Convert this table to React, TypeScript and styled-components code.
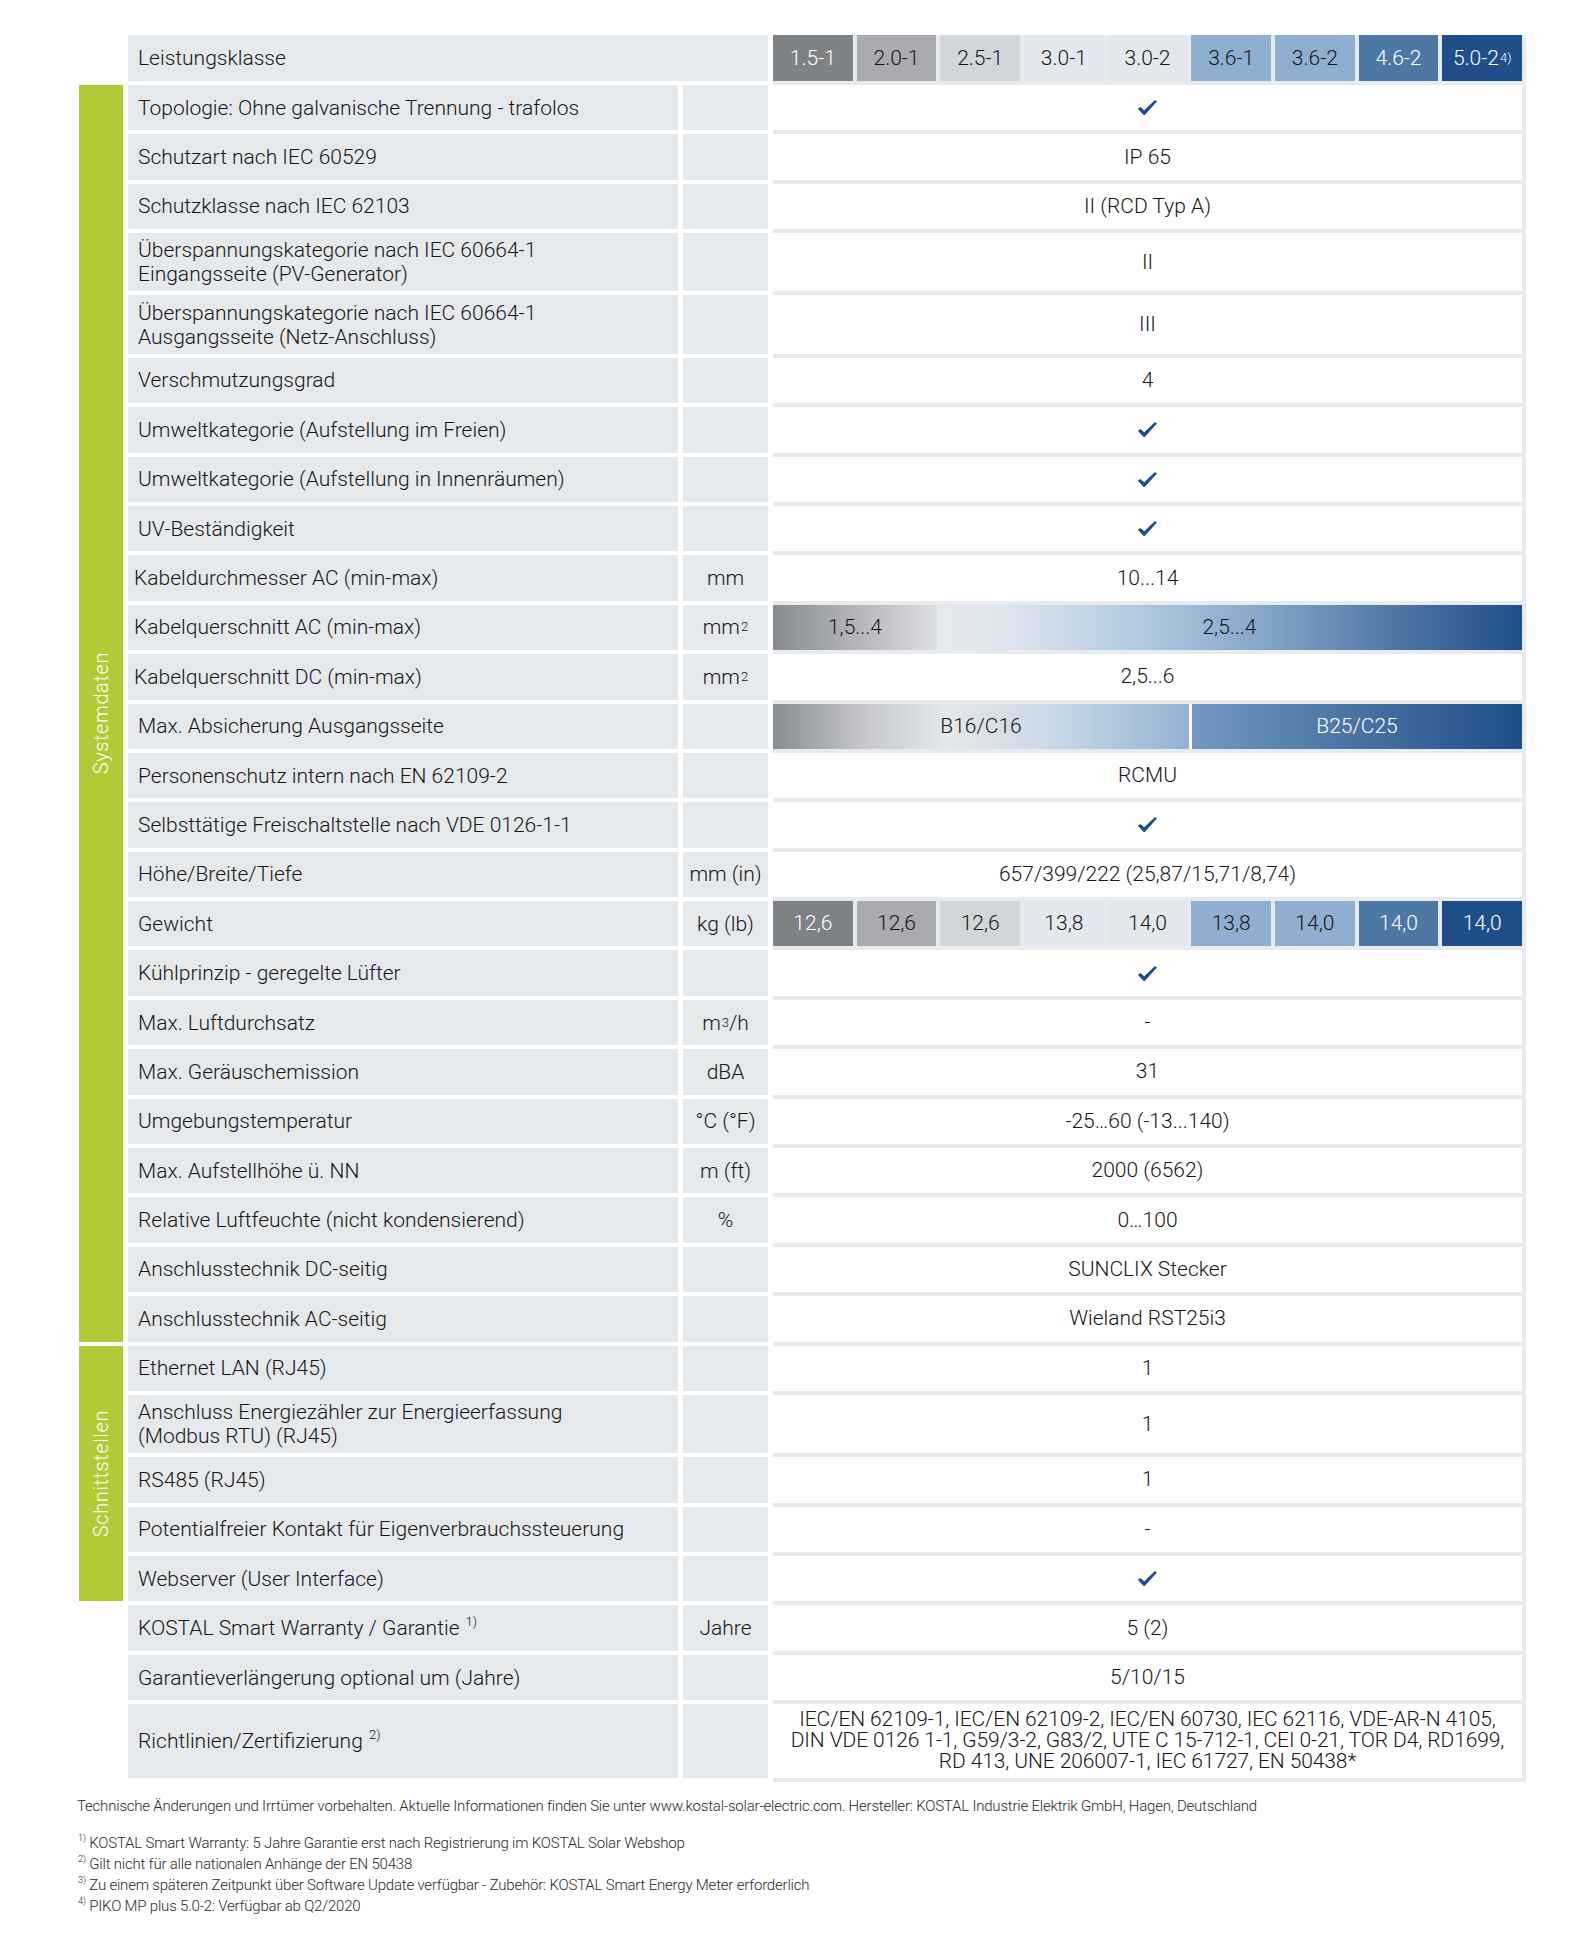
import React from 'react';
import styled, {createGlobalStyle} from 'styled-components';

const GREEN = '#b3c935';
const BLUE = '#1f4e8a';
const CELL_GRAY = '#e6e9ec';
const LINE_GRAY = '#e7eaee';
const INK = '#161616';

const GlobalStyle = createGlobalStyle`
  html, body {
    margin: 0;
    padding: 0;
    background: #fff;
  }
  body {
    font-family: Roboto, 'Liberation Sans', sans-serif;
    font-weight: 300;
    color: ${INK};
  }
`;

const Page = styled.div`
  width: 1595px;
  padding: 35px 0 40px 79px;
  box-sizing: border-box;
`;

const Table = styled.div`
  width: 1447px;
`;

const Group = styled.div`
  display: flex;
`;

const SideBar = styled.div`
  width: 44px;
  margin: 0 5px 4px 0;
  background: ${GREEN};
  display: flex;
  align-items: center;
  justify-content: center;
`;

const SideLabel = styled.span`
  writing-mode: vertical-rl;
  transform: rotate(180deg);
  color: #fff;
  font-size: 20px;
  letter-spacing: 0.6px;
`;

const Rows = styled.div`
  flex: 1;
`;

const Indented = styled.div`
  margin-left: 49px;
`;

const Row = styled.div<{$h: number}>`
  display: grid;
  grid-template-columns: 550px 85px 753px;
  column-gap: 5px;
  height: ${({$h}) => $h + 4}px;
`;

const LabelCell = styled.div<{$tight?: boolean; $span?: boolean}>`
  grid-column: ${({$span}) => ($span ? 'span 2' : 'auto')};
  box-sizing: border-box;
  height: 100%;
  border-bottom: 4px solid #fff;
  background: ${CELL_GRAY};
  padding-left: ${({$tight}) => ($tight ? 6 : 10)}px;
  display: flex;
  align-items: center;
  font-size: 21px;
  line-height: 24px;
`;

const UnitCell = styled.div`
  box-sizing: border-box;
  height: 100%;
  border-bottom: 4px solid #fff;
  background: ${CELL_GRAY};
  display: flex;
  align-items: center;
  justify-content: center;
  font-size: 21px;
`;

const ValueCell = styled.div`
  box-sizing: border-box;
  height: 100%;
  border-right: 4px solid ${LINE_GRAY};
  border-bottom: 4px solid ${LINE_GRAY};
  background: #fff;
  display: flex;
  align-items: center;
  justify-content: center;
  text-align: center;
  font-size: 21px;
  line-height: 21px;
`;

const Sup = styled.sup`
  font-size: 0.62em;
  line-height: 0;
  vertical-align: 0.7em;
  margin-left: 1px;
`;

const TONES: Record<string, [string, string]> = {
  g1: ['#7f8285', '#fff'],
  g2: ['#a9abae', INK],
  g3: ['#d3d6d9', INK],
  l: ['#e3e8ee', INK],
  b1: ['#8eafcf', INK],
  b2: ['#4d77a5', '#fff'],
  b3: ['#1f4e8a', '#fff'],
};

const BoxStrip = styled.div`
  width: 100%;
  height: 100%;
  display: grid;
  grid-template-columns: repeat(9, 1fr);
  column-gap: 4px;
  background: ${LINE_GRAY};
`;

const Box = styled.div<{$tone: string}>`
  background: ${({$tone}) => TONES[$tone][0]};
  color: ${({$tone}) => TONES[$tone][1]};
  display: flex;
  align-items: center;
  justify-content: center;
  font-size: 21px;
`;

const SegmentRow = styled.div`
  width: 100%;
  height: 100%;
  display: flex;
  gap: 3px;
`;

const Segment = styled.div<{$w?: number; $bg: string; $light?: boolean}>`
  flex: ${({$w}) => ($w ? `0 0 ${$w}px` : '1')};
  background: ${({$bg}) => $bg};
  color: ${({$light}) => ($light ? '#fff' : INK)};
  display: flex;
  align-items: center;
  justify-content: center;
  font-size: 21px;
`;

const Lines = styled.div`
  white-space: nowrap;
  letter-spacing: -0.1px;
`;

const Footer = styled.div`
  margin: 14px 0 0 -2px;
  font-size: 15px;
  line-height: 21px;
  letter-spacing: -0.2px;
  color: #2a2a2a;
`;

const Notes = styled.div`
  margin-top: 16px;
`;

const Check = () => (
  <svg width="21" height="17" viewBox="0 0 21 17">
    <path
      d="M0.8 9.8 L3.4 7.9 L7.2 11.3 L18 0.9 L20 2.6 L8.2 15.6 Q7.2 16.6 6.2 15.6 Z"
      fill={BLUE}
    />
  </svg>
);

const HEADER = ['1.5-1', '2.0-1', '2.5-1', '3.0-1', '3.0-2', '3.6-1', '3.6-2', '4.6-2', '5.0-2'];
const HEADER_TONES = ['g1', 'g2', 'g3', 'l', 'l', 'b1', 'b1', 'b2', 'b3'];
const WEIGHTS = ['12,6', '12,6', '12,6', '13,8', '14,0', '13,8', '14,0', '14,0', '14,0'];

type Spec = {
  label: React.ReactNode;
  unit?: React.ReactNode;
  value: React.ReactNode;
  h?: number;
  tight?: boolean;
};

const S = 45.4;
const D = 58.3;
const CHECK = <Check />;

const mm2 = (
  <>
    mm<Sup>2</Sup>
  </>
);

const acSplit = (
  <SegmentRow>
    <Segment $w={164} $bg="linear-gradient(90deg, #898c8f 0%, #b7b9bc 55%, #dcdee1 100%)">1,5...4</Segment>
    <Segment
      style={{marginLeft: -3}}
      $bg="linear-gradient(90deg, #e6e9ed 0%, #dde5ee 12%, #b0c8df 35%, #86a7ca 55%, #4b74a3 80%, #1f4e8a 100%)"
    >
      2,5...4
    </Segment>
  </SegmentRow>
);

const fuseSplit = (
  <SegmentRow>
    <Segment
      $w={416}
      $bg="linear-gradient(90deg, #8a8d90 0%, #c6c8cb 22%, #e4e7eb 42%, #c8d7e7 68%, #92b2d2 100%)"
    >
      B16/C16
    </Segment>
    <Segment $light $bg="linear-gradient(90deg, #7398c2 0%, #4c76a5 45%, #1f4e8a 100%)">
      B25/C25
    </Segment>
  </SegmentRow>
);

const weightStrip = (
  <BoxStrip>
    {WEIGHTS.map((w, i) => (
      <Box key={i} $tone={HEADER_TONES[i]}>
        {w}
      </Box>
    ))}
  </BoxStrip>
);

const SYSTEM: Spec[] = [
  {label: 'Topologie: Ohne galvanische Trennung - trafolos', value: CHECK},
  {label: 'Schutzart nach IEC 60529', value: 'IP 65'},
  {label: 'Schutzklasse nach IEC 62103', value: 'II (RCD Typ A)'},
  {
    label: (
      <>
        Überspannungskategorie nach IEC 60664-1
        <br />
        Eingangsseite (PV-Generator)
      </>
    ),
    value: 'II',
    h: D,
  },
  {
    label: (
      <>
        Überspannungskategorie nach IEC 60664-1
        <br />
        Ausgangsseite (Netz-Anschluss)
      </>
    ),
    value: 'III',
    h: D,
  },
  {label: 'Verschmutzungsgrad', value: '4'},
  {label: 'Umweltkategorie (Aufstellung im Freien)', value: CHECK},
  {label: 'Umweltkategorie (Aufstellung in Innenräumen)', value: CHECK},
  {label: 'UV-Beständigkeit', value: CHECK},
  {label: 'Kabeldurchmesser AC (min-max)', unit: 'mm', value: '10...14', tight: true},
  {label: 'Kabelquerschnitt AC (min-max)', unit: mm2, value: acSplit, tight: true},
  {label: 'Kabelquerschnitt DC (min-max)', unit: mm2, value: '2,5...6', tight: true},
  {label: 'Max. Absicherung Ausgangsseite', value: fuseSplit},
  {label: 'Personenschutz intern nach EN 62109-2', value: 'RCMU'},
  {label: 'Selbsttätige Freischaltstelle nach VDE 0126-1-1', value: CHECK},
  {label: 'Höhe/Breite/Tiefe', unit: 'mm (in)', value: '657/399/222 (25,87/15,71/8,74)'},
  {label: 'Gewicht', unit: 'kg (lb)', value: weightStrip},
  {label: 'Kühlprinzip - geregelte Lüfter', value: CHECK},
  {
    label: 'Max. Luftdurchsatz',
    unit: (
      <>
        m<Sup>3</Sup>/h
      </>
    ),
    value: '-',
  },
  {label: 'Max. Geräuschemission', unit: 'dBA', value: '31'},
  {label: 'Umgebungstemperatur', unit: '°C (°F)', value: '-25…60 (-13...140)'},
  {label: 'Max. Aufstellhöhe ü. NN', unit: 'm (ft)', value: '2000 (6562)'},
  {label: 'Relative Luftfeuchte (nicht kondensierend)', unit: '%', value: '0…100'},
  {label: 'Anschlusstechnik DC-seitig', value: 'SUNCLIX Stecker'},
  {label: 'Anschlusstechnik AC-seitig', value: 'Wieland RST25i3'},
];

const INTERFACES: Spec[] = [
  {label: 'Ethernet LAN (RJ45)', value: '1'},
  {
    label: (
      <>
        Anschluss Energiezähler zur Energieerfassung
        <br />
        (Modbus RTU) (RJ45)
      </>
    ),
    value: '1',
    h: D,
  },
  {label: 'RS485 (RJ45)', value: '1'},
  {label: 'Potentialfreier Kontakt für Eigenverbrauchssteuerung', value: '-'},
  {label: 'Webserver (User Interface)', value: CHECK},
];

const OTHER: Spec[] = [
  {
    label: (
      <>
        KOSTAL Smart Warranty / Garantie <Sup>1)</Sup>
      </>
    ),
    unit: 'Jahre',
    value: '5 (2)',
  },
  {label: 'Garantieverlängerung optional um (Jahre)', value: '5/10/15'},
  {
    label: (
      <>
        Richtlinien/Zertifizierung <Sup>2)</Sup>
      </>
    ),
    value: (
      <Lines>
        IEC/EN 62109-1, IEC/EN 62109-2, IEC/EN 60730, IEC 62116, VDE-AR-N 4105,
        <br />
        DIN VDE 0126 1-1, G59/3-2, G83/2, UTE C 15-712-1, CEI 0-21, TOR D4, RD1699,
        <br />
        RD 413, UNE 206007-1, IEC 61727, EN 50438*
      </Lines>
    ),
    h: 73.5,
  },
];

const SpecRow = ({spec}: {spec: Spec}) => (
  <Row $h={spec.h ?? S}>
    <LabelCell $tight={spec.tight}>
      <div>{spec.label}</div>
    </LabelCell>
    <UnitCell>{spec.unit}</UnitCell>
    <ValueCell>{spec.value}</ValueCell>
  </Row>
);

const Section = ({title, specs}: {title: string; specs: Spec[]}) => (
  <Group>
    <SideBar>
      <SideLabel>{title}</SideLabel>
    </SideBar>
    <Rows>
      {specs.map((s, i) => (
        <SpecRow key={i} spec={s} />
      ))}
    </Rows>
  </Group>
);

export default function App() {
  return (
    <Page>
      <GlobalStyle />
      <Table>
        <Indented>
          <Row $h={46}>
            <LabelCell $span>Leistungsklasse</LabelCell>
            <ValueCell>
              <BoxStrip>
                {HEADER.map((h, i) => (
                  <Box key={h} $tone={HEADER_TONES[i]}>
                    {h}
                    {i === 8 && <Sup>4)</Sup>}
                  </Box>
                ))}
              </BoxStrip>
            </ValueCell>
          </Row>
        </Indented>
        <Section title="Systemdaten" specs={SYSTEM} />
        <Section title="Schnittstellen" specs={INTERFACES} />
        <Indented>
          {OTHER.map((s, i) => (
            <SpecRow key={i} spec={s} />
          ))}
        </Indented>
      </Table>
      <Footer>
        Technische Änderungen und Irrtümer vorbehalten. Aktuelle Informationen finden Sie unter
        www.kostal-solar-electric.com. Hersteller: KOSTAL Industrie Elektrik GmbH, Hagen, Deutschland
        <Notes>
          <div>
            <Sup>1)</Sup> KOSTAL Smart Warranty: 5 Jahre Garantie erst nach Registrierung im KOSTAL
            Solar Webshop
          </div>
          <div>
            <Sup>2)</Sup> Gilt nicht für alle nationalen Anhänge der EN 50438
          </div>
          <div>
            <Sup>3)</Sup> Zu einem späteren Zeitpunkt über Software Update verfügbar - Zubehör: KOSTAL
            Smart Energy Meter erforderlich
          </div>
          <div>
            <Sup>4)</Sup> PIKO MP plus 5.0-2: Verfügbar ab Q2/2020
          </div>
        </Notes>
      </Footer>
    </Page>
  );
}
